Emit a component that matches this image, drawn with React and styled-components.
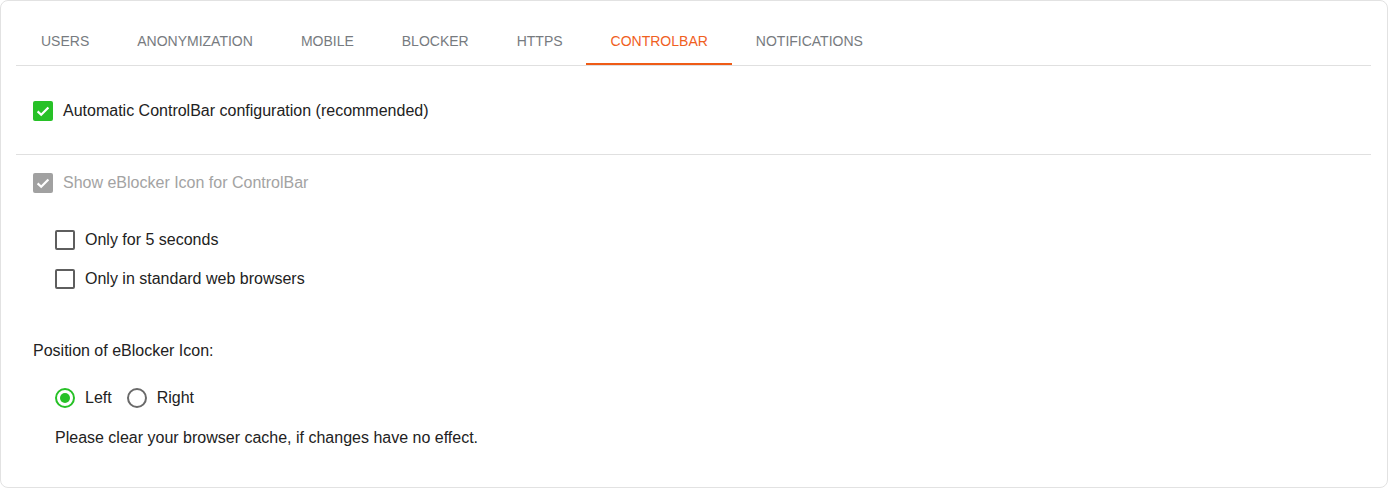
import React from "react";
import styled, { createGlobalStyle } from "styled-components";

const Global = createGlobalStyle`
  html, body { margin: 0; padding: 0; background: #fff; }
  body { font-family: "Liberation Sans", Arial, sans-serif; }
  * { box-sizing: border-box; }
`;

const Card = styled.div`
  width: 1388px;
  height: 488px;
  border: 1px solid #e2e2e2;
  border-radius: 8px;
  padding: 16px 16px 0 15px;
  background: #fff;
  overflow: hidden;
`;

const TabBar = styled.div`
  display: flex;
  height: 49px;
  border-bottom: 1px solid #e0e0e0;
`;

const Tab = styled.div`
  height: 48px;
  padding: 2px 24px 0 25px;
  margin-right: -1px;
  display: flex;
  align-items: center;
  font-size: 14px;
  text-transform: uppercase;
  color: ${(p) => (p.$active ? "#f0601e" : "#777b80")};
  border-bottom: 2px solid ${(p) => (p.$active ? "#ef5b16" : "transparent")};
`;

const Section = styled.div`
  padding: ${(p) => p.$pad || "0"};
  border-bottom: ${(p) => (p.$divider ? "1px solid #e0e0e0" : "none")};
  display: flex;
  flex-direction: column;
`;

const Row = styled.label`
  display: flex;
  align-items: center;
  height: ${(p) => p.$h || 36}px;
  margin-left: ${(p) => p.$indent || 0}px;
  font-size: 16px;
  color: ${(p) => (p.$disabled ? "#a3a3a3" : "#222")};
  gap: 10px;
`;

const Box = styled.span`
  width: 20px;
  height: 20px;
  border-radius: 2px;
  flex: none;
  display: flex;
  align-items: center;
  justify-content: center;
  background: ${(p) => (p.$checked ? (p.$disabled ? "#a1a1a1" : "#27c127") : "transparent")};
  border: ${(p) => (p.$checked ? "none" : "2px solid #5e5e5e")};
`;

const Check = () => (
  <svg width="16" height="16" viewBox="0 0 16 16">
    <path d="M2.6 8.4 L6.2 11.8 L13.4 4.4" fill="none" stroke="#fff" strokeWidth="2.2" />
  </svg>
);

const Checkbox = ({ checked, disabled }) => (
  <Box $checked={checked} $disabled={disabled}>
    {checked && <Check />}
  </Box>
);

const Label = styled.div`
  font-size: 16px;
  color: #222;
  margin-left: 17px;
  line-height: 20px;
`;

const RadioGroup = styled.div`
  display: flex;
  align-items: center;
  margin-left: 39px;
  height: 36px;
`;

const RadioItem = styled.label`
  display: flex;
  align-items: center;
  gap: 10px;
  font-size: 16px;
  color: #222;
  margin-right: 15px;
`;

const Radio = styled.span`
  width: 20px;
  height: 20px;
  border-radius: 50%;
  border: 2px solid ${(p) => (p.$checked ? "#27c127" : "#6a6a6a")};
  display: flex;
  align-items: center;
  justify-content: center;
  &::after {
    content: "";
    width: 10px;
    height: 10px;
    border-radius: 50%;
    background: ${(p) => (p.$checked ? "#27c127" : "transparent")};
  }
`;

const Note = styled.div`
  font-size: 16px;
  color: #222;
  margin-left: 39px;
  line-height: 20px;
`;

const Spacer = styled.div`
  height: ${(p) => p.$h}px;
`;

const tabs = ["Users", "Anonymization", "Mobile", "Blocker", "HTTPS", "ControlBar", "Notifications"];

export default function App() {
  return (
    <>
      <Global />
      <Card>
        <TabBar>
          {tabs.map((t) => (
            <Tab key={t} $active={t === "ControlBar"}>
              {t}
            </Tab>
          ))}
        </TabBar>
        <Section $divider $pad="27px 0 25px 17px">
          <Row>
            <Checkbox checked />
            Automatic ControlBar configuration (recommended)
          </Row>
        </Section>
        <Section $pad="10px 0 0 17px">
          <Row $disabled>
            <Checkbox checked disabled />
            Show eBlocker Icon for ControlBar
          </Row>
          <Spacer $h={19} />
          <Row $indent={22} $h={39}>
            <Checkbox />
            Only for 5 seconds
          </Row>
          <Row $indent={22} $h={39}>
            <Checkbox />
            Only in standard web browsers
          </Row>
        </Section>
        <Section $pad="43px 0 0 0">
          <Label>Position of eBlocker Icon:</Label>
          <Spacer $h={19} />
          <RadioGroup>
            <RadioItem>
              <Radio $checked />
              Left
            </RadioItem>
            <RadioItem>
              <Radio />
              Right
            </RadioItem>
          </RadioGroup>
          <Spacer $h={12} />
          <Note>Please clear your browser cache, if changes have no effect.</Note>
        </Section>
      </Card>
    </>
  );
}
